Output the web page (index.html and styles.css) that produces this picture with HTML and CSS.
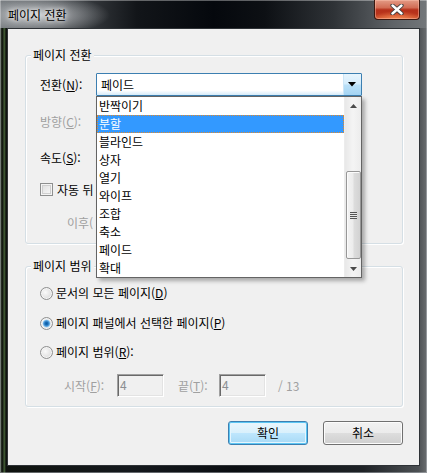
FILE: index.html
```html
<!DOCTYPE html>
<html lang="ko">
<head>
<meta charset="utf-8">
<title>페이지 전환</title>
<link rel="stylesheet" href="styles.css">
</head>
<body>
<div class="window">
  <div class="titlebar">
    <span class="title">페이지 전환</span>
    <div class="close">
      <svg width="14" height="11" viewBox="0 0 14 11">
        <path d="M2.5 1.5 L11.5 9.5 M11.5 1.5 L2.5 9.5" stroke="#3a3a3a" stroke-width="4.2" stroke-linecap="round" fill="none"/>
        <path d="M2.5 1.5 L11.5 9.5 M11.5 1.5 L2.5 9.5" stroke="#fff" stroke-width="2.4" stroke-linecap="round" fill="none"/>
      </svg>
    </div>
  </div>
  <div class="frame-body">
    <div class="client">
      <fieldset class="group g1">
        <legend>페이지 전환</legend>
        <div class="row r1">
          <span class="lbl">전환(<u>N</u>):</span>
          <div class="combo">
            <span class="combo-text">페이드</span>
            <span class="combo-btn">
              <svg width="8" height="5" viewBox="0 0 8 5"><path d="M0 0 H8 L4 4.5 Z" fill="#000"/></svg>
            </span>
            <div class="dropdown">
              <ul class="items">
                <li>반짝이기</li>
                <li class="sel">분할</li>
                <li>블라인드</li>
                <li>상자</li>
                <li>열기</li>
                <li>와이프</li>
                <li>조합</li>
                <li>축소</li>
                <li>페이드</li>
                <li>확대</li>
              </ul>
              <div class="vscroll">
                <span class="arrow">
                  <svg width="7" height="4" viewBox="0 0 7 4"><path d="M0 4 H7 L3.5 0 Z" fill="#4a4a4a"/></svg>
                </span>
                <span class="track">
                  <span class="thumb">
                    <span class="grip"></span>
                  </span>
                </span>
                <span class="arrow">
                  <svg width="7" height="4" viewBox="0 0 7 4"><path d="M0 0 H7 L3.5 4 Z" fill="#4a4a4a"/></svg>
                </span>
              </div>
            </div>
          </div>
        </div>
        <div class="row r2"><span class="lbl dis">방향(<u>C</u>):</span></div>
        <div class="row r3"><span class="lbl">속도(<u>S</u>):</span></div>
        <div class="row r4"><span class="check"></span><span class="check-text">자동 뒤</span></div>
        <div class="row r5"><span class="dis after">이후(</span></div>
      </fieldset>

      <fieldset class="group g2">
        <legend>페이지 범위</legend>
        <div class="row radio-row rr1"><span class="radio"></span><span class="radio-text">문서의 모든 페이지(<u>D</u>)</span></div>
        <div class="row radio-row rr2"><span class="radio on"></span><span class="radio-text">페이지 패널에서 선택한 페이지(<u>P</u>)</span></div>
        <div class="row radio-row rr3"><span class="radio"></span><span class="radio-text">페이지 범위(<u>R</u>):</span></div>
        <div class="row range-row">
          <span class="dis lbl-from">시작(<u>F</u>):</span>
          <span class="field">4</span>
          <span class="dis lbl-to">끝(<u>T</u>):</span>
          <span class="field">4</span>
          <span class="dis total">/ 13</span>
        </div>
      </fieldset>

      <div class="buttons">
        <button class="btn default">확인</button>
        <button class="btn">취소</button>
      </div>
    </div>
  </div>
</div>
</body>
</html>
```

FILE: styles.css
```css
* { box-sizing: border-box; }
html, body { margin: 0; padding: 0; }
body {
  font: 12px/16px "Noto Sans CJK KR", "Noto Sans", sans-serif;
  color: #000;
  background: #ffffff;
}
u { text-decoration: underline; text-underline-offset: 1px; }

.window {
  width: 427px;
  height: 473px;
  display: flex;
  flex-direction: column;
  background: linear-gradient(to right, #3a4436 0px, #0d110d 3px, #4b6a3c 4px, #0f130f 6px, #15191d 30%, #0b0e12 55%, #1e2226 85%, #4c5053 98%, #6b6e70 100%);
  box-shadow: inset 0 0 0 1px rgba(200, 205, 210, 0.45);
}

.titlebar {
  height: 28px;
  flex: none;
  display: flex;
  justify-content: space-between;
  align-items: flex-start;
  padding: 0 7px 0 8px;
  background:
    radial-gradient(ellipse 70px 20px at 40px 15px, rgba(230, 232, 235, 0.75), rgba(230, 232, 235, 0) 100%),
    linear-gradient(to right, #6e7377 0%, #3d4145 18%, #121519 32%, #05080d 50%, #0d1014 62%, #2e3236 78%, #5f6367 92%, #73777a 100%);
  box-shadow: inset 0 1px 0 rgba(255, 255, 255, 0.35), inset 1px 0 0 rgba(255, 255, 255, 0.3), inset -1px 0 0 rgba(255, 255, 255, 0.3);
}
.title {
  margin-top: 7px;
  color: #000;
  text-shadow: 0 0 4px #fff, 0 0 8px rgba(255, 255, 255, 0.9);
}
.close {
  width: 46px;
  height: 20px;
  display: flex;
  align-items: center;
  justify-content: center;
  border: 1px solid #3b1810;
  border-top: none;
  border-radius: 0 0 4px 4px;
  background:
    radial-gradient(ellipse 26px 8px at 50% 100%, rgba(255, 150, 90, 0.8), rgba(255, 120, 70, 0) 100%),
    linear-gradient(#e39b86 0%, #d26d55 40%, #b5301a 52%, #b9341c 75%, #cf5530 100%);
  box-shadow: inset 0 0 0 1px rgba(255, 200, 180, 0.45);
}

.frame-body {
  flex: 1;
  display: flex;
  padding: 0 7px 7px 7px;
}
.client {
  flex: 1;
  background: #f0f0f0;
  border: 1px solid #2e3236;
  padding-top: 18px;
  display: flex;
  flex-direction: column;
}

.group {
  margin: 0 16px 0 17px;
  border: 1px solid #d5dfe5;
  border-radius: 3px;
  box-shadow: 1px 1px 0 #fff, inset 1px 1px 0 #fff;
  padding: 10px 8px 9px 5px;
  min-width: 0;
}
.group legend {
  padding: 0 2px;
  line-height: 16px;
  background: #f0f0f0;
}
.g2 { margin-top: 14px; padding-top: 9px; }

.row {
  display: flex;
  align-items: center;
  height: 23px;
  margin-left: 9px;
}
.lbl { width: 56px; flex: none; white-space: nowrap; }
.dis { color: #a0a0a0; }
.r2 { margin-top: 14px; }
.r3 { margin-top: 13px; }
.r4 { margin-top: 9px; }
.r5 { margin-top: 10px; }
.after { margin-left: 27px; white-space: nowrap; }

/* combo box */
.combo {
  position: relative;
  width: 266px;
  height: 23px;
  display: flex;
  border: 1px solid #3c7fb1;
  border-radius: 1px;
  background: linear-gradient(#ffffff 0%, #ffffff 78%, #d6ebf9 100%);
  z-index: 5;
}
.combo-text {
  flex: 1;
  padding-left: 4px;
  line-height: 21px;
}
.combo-btn {
  width: 18px;
  display: flex;
  align-items: center;
  justify-content: center;
  background: linear-gradient(#e8f5fd 0%, #d6edfc 45%, #b9e0f8 55%, #a4d4f3 100%);
  box-shadow: inset 1px 0 0 #cde6f7;
}
.dropdown {
  position: absolute;
  left: -1px;
  top: 22px;
  width: 266px;
  height: 182px;
  background: #fff;
  border: 1px solid #646464;
  display: flex;
  box-shadow: 3px 3px 4px rgba(0, 0, 0, 0.3);
}
.items {
  list-style: none;
  margin: 0;
  padding: 0;
  flex: 1;
}
.items li {
  height: 18px;
  line-height: 18px;
  padding-left: 2px;
  white-space: nowrap;
}
.items li.sel {
  background: #3399ff;
  color: #fff;
  outline: 1px dotted #e0892c;
  outline-offset: -1px;
}
.vscroll {
  width: 17px;
  display: flex;
  flex-direction: column;
  background: linear-gradient(to right, #e8e8e8, #f4f4f4 50%, #ececec);
  border-left: 1px solid #ececec;
}
.vscroll .arrow {
  height: 17px;
  display: flex;
  align-items: center;
  justify-content: center;
}
.track {
  flex: 1;
  display: flex;
  flex-direction: column;
  justify-content: flex-end;
  padding-bottom: 1px;
}
.thumb {
  height: 88px;
  margin: 0 0 0 1px;
  width: 15px;
  border: 1px solid #979797;
  border-radius: 2px;
  background: linear-gradient(to right, #f3f3f3 0%, #ececec 45%, #dcdcdc 55%, #d2d2d2 100%);
  box-shadow: inset 1px 1px 0 #fbfbfb;
  display: flex;
  align-items: center;
  justify-content: center;
}
.grip {
  width: 7px;
  height: 7px;
  background: repeating-linear-gradient(#555 0 1px, #e8e8e8 1px 2px);
}

/* checkbox */
.check {
  width: 13px;
  height: 13px;
  flex: none;
  border: 1px solid #8e8f8f;
  background: linear-gradient(135deg, #dcdcdc, #fbfbfb);
  box-shadow: inset 0 0 0 1px #f4f4f4, inset 0 0 0 2px #cfcfcf;
}
.check-text { margin-left: 4px; white-space: nowrap; }

/* radios */
.radio-row { height: 20px; }
.rr2 { margin-top: 10px; }
.rr3 { margin-top: 9px; }
.radio {
  width: 13px;
  height: 13px;
  flex: none;
  border-radius: 50%;
  border: 1px solid #8e8f8f;
  background: radial-gradient(circle at 40% 40%, #fafafa 0%, #e2e2e2 60%, #d0d0d0 100%);
  box-shadow: inset 0 0 0 1px #f5f5f5;
}
.radio.on {
  background:
    radial-gradient(circle at 50% 50%, #0d5ca5 0, #1a6fb8 1.5px, #63a8e0 3px, #9fd2f4 3.6px, rgba(160, 210, 245, 0) 4.2px),
    radial-gradient(circle at 40% 40%, #fafafa 0%, #e2e2e2 60%, #d0d0d0 100%);
}
.radio-text { margin-left: 3px; white-space: nowrap; }

.range-row { margin-top: 12px; }
.lbl-from { margin-left: 24px; width: 53px; flex: none; white-space: nowrap; }
.lbl-to { margin-left: 14px; width: 41px; flex: none; white-space: nowrap; }
.field {
  width: 47px;
  height: 23px;
  flex: none;
  padding-left: 2px;
  line-height: 19px;
  color: #8a8e92;
  background: #f0f0f0;
  border-top: 1px solid #a0a0a0;
  border-left: 1px solid #a0a0a0;
  border-right: 1px solid #ffffff;
  border-bottom: 1px solid #ffffff;
  box-shadow: inset 1px 1px 0 #696969, inset -1px -1px 0 #e3e3e3;
}
.total { margin-left: 12px; }

/* buttons */
.buttons {
  display: flex;
  justify-content: flex-end;
  gap: 15px;
  margin: 14px 16px 0 0;
}
.btn {
  width: 80px;
  height: 24px;
  padding: 0;
  font: inherit;
  color: #000;
  border: 1px solid #707070;
  border-radius: 3px;
  background: linear-gradient(#f2f2f2 0%, #ebebeb 50%, #dddddd 51%, #cfcfcf 100%);
  box-shadow: inset 0 0 0 1px #fcfcfc;
}
.btn.default {
  border-color: #3c7fb1;
  background: linear-gradient(#eaf6fd 0%, #d9f0fc 50%, #bee6fd 51%, #a7d9f5 100%);
  box-shadow: inset 0 0 0 1px #5cc6f4, inset 0 0 0 2px #e6f5fd;
}
```
